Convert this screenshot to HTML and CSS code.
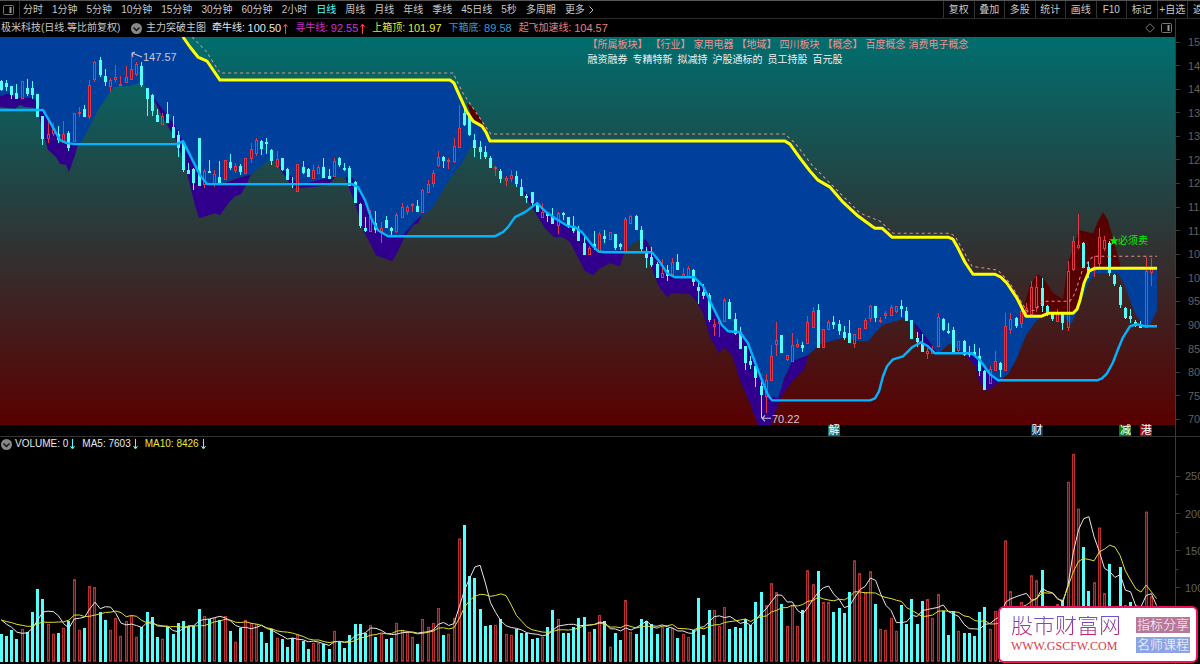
FILE: index.html
```html
<!DOCTYPE html>
<html lang="zh-CN">
<head>
    <meta charset="UTF-8">
    <title>极米科技 日线</title>
    <link rel="stylesheet" href="styles.css">
</head>
<body>

    <!-- Period bar -->
    <header class="topbar">
        <button class="layout-btn" aria-label="布局">
            <svg width="11" height="10" viewBox="0 0 11 10"><rect x="0.5" y="0.5" width="10" height="9" rx="1" fill="none" stroke="#777"/><path d="M7.5 2v6" stroke="#999" stroke-width="2"/></svg>
        </button>
        <nav class="periods">
            <button>分时</button>
            <button>1分钟</button>
            <button>5分钟</button>
            <button>10分钟</button>
            <button>15分钟</button>
            <button>30分钟</button>
            <button>60分钟</button>
            <button>2小时</button>
            <button class="active">日线</button>
            <button>周线</button>
            <button>月线</button>
            <button>年线</button>
            <button>季线</button>
            <button>45日线</button>
            <button>5秒</button>
            <button>多周期</button>
            <button class="more">更多
                <svg width="5" height="8" viewBox="0 0 5 8"><path d="M0.5 0.5L4 4L0.5 7.5" fill="none" stroke="#bbb"/></svg>
            </button>
        </nav>
        <div class="tools">
            <button>复权</button>
            <button>叠加</button>
            <button>多股</button>
            <button>统计</button>
            <button>画线</button>
            <button>F10</button>
            <button>标记</button>
            <button>+自选</button>
            <button>返</button>
        </div>
    </header>

    <!-- Price panel -->
    <section class="panel price">
        <div class="plot">
            <div class="legend">
                <h1 class="stock">极米科技(日线.等比前复权)</h1>
                <button class="fold" aria-label="收起指标">
                    <svg width="11" height="11" viewBox="0 0 11 11"><circle cx="5.5" cy="5.5" r="5.5" fill="#888"/><path d="M2.5 4.5L5.5 7.5L8.5 4.5" fill="none" stroke="#111" stroke-width="1.4"/></svg>
                </button>
                <span class="indicator">主力突破主图</span>
                <span class="value white">牵牛线: <b>100.50</b><svg class="arrow up" viewBox="0 0 5 11"><path d="M2.5 11V2M0.5 4L2.5 1L4.5 4"/></svg></span>
                <span class="value magenta">寻牛线: <b>92.55</b><svg class="arrow up" viewBox="0 0 5 11"><path d="M2.5 11V2M0.5 4L2.5 1L4.5 4"/></svg></span>
                <span class="value yellow">上箱顶: <b>101.97</b></span>
                <span class="value blue">下箱底: <b>89.58</b></span>
                <span class="value salmon">起飞加速线: <b>104.57</b></span>
                <span class="corner">
                    <svg width="10" height="10" viewBox="0 0 10 10"><path d="M5 0.7L9.3 5L5 9.3L0.7 5Z" fill="none" stroke="#777"/></svg>
                    <svg width="11" height="10" viewBox="0 0 11 10"><rect x="0.5" y="0.5" width="10" height="9" rx="1" fill="none" stroke="#777"/><path d="M7.5 2v6" stroke="#999" stroke-width="2"/></svg>
                </span>
            </div>
            <div class="chart price-chart">
                <svg id="price" viewBox="0 37 1175 388" preserveAspectRatio="none">
                    <!-- bands -->
                    <path class="band-up" d="M467 103L475 110L488 132L482 128L472 118ZM1022 313L1030 285L1038 274L1045 280L1053 293L1063 299L1068 263L1074 245L1079 230L1093 233L1098 221L1103 212L1108 220L1114 242L1121 268H1095L1088 272L1078 307L1073 313H1048L1041 316H1026Z"/>
                    <path class="band-main" d="M0 37H183L190 47L198 57L207 61L220 80H452L457 90L467 112L473 121L482 126L490 141H785L800 158L818 180L830 187L843 202L857 215L872 226L882 228L892 237H950L955 241L965 262L973 274H997L1007 282L1017 298L1026 316H1041L1035 322L1026 335L1016 360L1008 374L1000 380L985 378L980 368L968 356L955 347L950 343L940 352L935 353L925 337L918 328L905 318L882 325L875 333L868 341L858 341L845 337L820 344L808 355L792 362L784 378L778 400H770L758 370L748 343L740 332H728L713 307L703 286L694 277H675L660 262L648 242L640 238L625 250L600 252L582 232L568 226L545 211L538 206L530 198L520 188L505 178L490 158L480 147L474 145L470 148L462 163L450 178L440 195L432 208L420 218L404 236H388L372 220L358 187L350 178L340 176L318 181L300 186L290 176L275 162L266 162L251 174L235 178L220 184H207L192 160L175 128L160 108L150 94L142 82L130 86L114 87L110 92L98 110L88 130L80 144H64L44 112L36 100L0 97Z"/>
                    <path class="band-main" d="M1060 313H1073L1078 307L1088 272L1095 268H1157V310L1150 325H1144L1136 315L1130 300L1125 285L1118 273H1095L1088 283L1078 310L1071 324Z"/>
                    <path class="band-low" d="M0 96L10 93L16 98H34L38 104L44 112L58 138L64 143L78 144L75 155L69 172L66 165L60 164L56 157L48 150L43 133L37 108L25 107L20 105L15 109L0 107Z"/>
                    <path class="band-low" d="M152 96L165 112L175 126L184 143L192 160L200 177L207 184H222L238 178L251 174L247 183L241 194L235 196L230 201L224 209L220 215L215 213L199 218L195 205L185 165L176 140L163 118Z"/>
                    <path class="band-low" d="M276 163L290 175L300 185L318 180L336 176L328 185L310 187L293 188ZM345 177L352 177L358 187L365 200L372 220L378 230L388 236H402L415 221L422 215L418 223L413 225L404 238L397 253L392 261L376 255L370 243L363 230L355 203Z"/>
                    <path class="band-low" d="M520 187L533 199L545 211L568 226L575 227L582 232L593 246L605 252L625 250L620 266L610 263L600 268L593 275L585 271L580 261L570 242L563 237H554L545 228L535 212Z"/>
                    <path class="band-low" d="M640 240L646 239L652 252L660 262L667 273L675 277H694L703 286L713 307L722 325L728 331H740L748 343L758 370L768 395L778 398L785 377L792 361L808 355L805 368L793 380L782 395L776 410L771 425H758L750 403L740 380L732 355L724 347L719 353L710 337L703 313L697 302L690 294L672 293L667 297L658 285L650 262Z"/>
                    <path class="band-low" d="M912 320L920 329L930 342L938 354L930 350L920 340ZM965 354L975 355L985 368L998 379L1002 381L995 385L987 391L980 383L975 366Z"/>
                    <g id="candles" class="candles"></g>
                    <!-- lines -->
                    <path class="line speed" d="M192 37L206 51L220 73H453L463 93L488 130L491 134H785L795 143L812 165L829 182L860 213L880 221L893 233H950L955 236L972 266L998 270L1010 283L1027 311L1035 310L1043 301H1070L1075 293L1083 268L1093 256H1157"/>
                    <path class="line bottom-box" d="M0 110H43L50 122L60 140L67 143L75 144H177L183 141L190 155L200 175L207 184H352L358 187L365 200L372 220L378 230L388 236H495L503 232L508 227L515 217L525 212L537 203L545 211L555 218L568 226L575 227L582 232L593 246L598 251L605 252H652L660 262L667 273L675 277H694L703 286L713 307L722 325L728 331L740 332L748 343L758 370L768 395L772 400H870L875 398L879 391L883 376L887 366L893 359L903 356L912 347L921 342L928 346L935 353H972L980 360L990 374L998 380H1097L1102 378L1107 373L1113 362L1118 349L1123 337L1130 326L1137 324L1145 326H1157"/>
                    <path class="line top-box" d="M183 37L190 47L198 57L207 61L220 80H450L454 83L457 90L467 112L473 121L482 126L486 132L490 141H785L790 144L795 151L800 158L810 171L818 180L830 187L843 202L857 215L872 226L875 228H882L892 237H948L953 239L957 246L965 262L973 274H995L1001 277L1007 283L1017 298L1026 316H1041L1048 313H1073L1077 309L1080 300L1084 283L1089 271L1095 268H1157"/>
                    <!-- high / low marks -->
                    <path class="mark" d="M142 57L132 53M135 52L132 53L133 57M771 418H762M765 415L762 418L765 421"/>
                    <text class="extreme" x="143" y="61">147.57</text>
                    <text class="extreme" x="772" y="423">70.22</text>
                    <path class="sell" d="M1114 235L1115 239H1119L1116 241L1117 245L1114 243L1111 245L1112 241L1109 239H1113Z"/>
                    <text class="sell" x="1118" y="244">必须卖</text>
                </svg>
                <div class="tags">
                    <p class="tags-main"><span>【所属板块】</span><span>【行业】</span><span>家用电器</span><span>【地域】</span><span>四川板块</span><span>【概念】</span><span>百度概念</span><span>消费电子概念</span></p>
                    <p class="tags-more"><span>融资融券</span><span>专精特新</span><span>拟减持</span><span>沪股通标的</span><span>员工持股</span><span>百元股</span></p>
                </div>
            </div>
            <div class="events" id="events"></div>
        </div>
        <ul class="axis price-axis">
            <li>15</li><li>14</li><li>14</li><li>13</li><li>13</li><li>12</li><li>12</li><li>11</li><li>11</li>
            <li>10</li><li>10</li><li>95</li><li>90</li><li>85</li><li>80</li><li>75</li><li>70</li>
        </ul>
    </section>

    <!-- Volume panel -->
    <section class="panel volume">
        <div class="plot">
            <div class="legend">
                <button class="fold" aria-label="收起成交量">
                    <svg width="11" height="11" viewBox="0 0 11 11"><circle cx="5.5" cy="5.5" r="5.5" fill="#888"/><path d="M2.5 4.5L5.5 7.5L8.5 4.5" fill="none" stroke="#111" stroke-width="1.4"/></svg>
                </button>
                <span class="value white">VOLUME: 0<svg class="arrow down" viewBox="0 0 5 11"><path d="M2.5 0V9M0.5 7L2.5 10L4.5 7"/></svg></span>
                <span class="value white">MA5: 7603<svg class="arrow down" viewBox="0 0 5 11"><path d="M2.5 0V9M0.5 7L2.5 10L4.5 7"/></svg></span>
                <span class="value yellow">MA10: 8426<svg class="arrow down" viewBox="0 0 5 11"><path d="M2.5 0V9M0.5 7L2.5 10L4.5 7"/></svg></span>
            </div>
            <div class="chart">
                <svg id="volume" viewBox="0 450 1175 214" preserveAspectRatio="none">
                    <g id="bars" class="bars"></g>
                    <path id="ma5" class="ma ma5"/>
                    <path id="ma10" class="ma ma10"/>
                </svg>
            </div>
        </div>
        <ul class="axis volume-axis">
            <li>250</li><li class="minor"></li>
            <li>200</li><li class="minor"></li>
            <li>150</li><li class="minor"></li>
            <li>100</li><li class="minor"></li>
            <li></li>
        </ul>
    </section>

    <aside class="watermark">
        <div class="site">
            <strong>股市财富网</strong>
            <span>WWW.GSCFW.COM</span>
        </div>
        <div class="badges">
            <span class="badge rose">指标分享</span>
            <span class="badge sky">名师课程</span>
        </div>
    </aside>

    <script src="chart.js"></script>
</body>
</html>
```

FILE: styles.css
```css
* {
    box-sizing: border-box;
}
body {
    margin: 0;
    height: 100vh;
    display: flex;
    flex-direction: column;
    overflow: hidden;
    background: #000;
    color: #c8c8c8;
    font-family: "Liberation Sans", "Noto Sans CJK SC", sans-serif;
    font-size: 10px;
    line-height: 14px;
}
button {
    padding: 0;
    border: 0;
    background: none;
    color: inherit;
    font: inherit;
    white-space: nowrap;
    cursor: pointer;
}
button:hover {
    color: #fff;
}
svg {
    display: block;
}
h1, p, ul {
    margin: 0;
    padding: 0;
}

/* period bar */
.topbar {
    display: flex;
    height: 19px;
    flex: none;
    border-top: 1px solid #555;
    border-bottom: 1px solid #2a2a2a;
}
.layout-btn {
    width: 20px;
    padding-left: 3px;
    border-right: 1px solid #333;
}
.periods {
    display: flex;
    align-items: center;
    gap: 9px;
    padding-left: 3px;
}
.periods .active {
    color: #54ffff;
}
.more {
    display: flex;
    align-items: center;
    gap: 4px;
}
.tools {
    display: grid;
    grid-template-columns: repeat(8, 1fr) 13px;
    width: 257px;
    margin-left: auto;
    overflow: hidden;
}
.tools button {
    border-left: 1px solid #333;
}
.tools button:last-child {
    padding-left: 5px;
    text-align: left;
}

/* panels */
.panel {
    display: flex;
    min-height: 0;
}
.price {
    flex: 418;
    border-bottom: 1px solid #333;
}
.volume {
    flex: 227;
}
.plot {
    display: flex;
    flex-direction: column;
    flex: 1;
    min-width: 0;
}
.chart {
    position: relative;
    flex: 1;
    min-height: 0;
}
.chart > svg {
    width: 100%;
    height: 100%;
}
.price-chart {
    background: linear-gradient(#006e6e, #5a0000);
}
.legend {
    display: flex;
    align-items: center;
    height: 18px;
    flex: none;
    padding-left: 1px;
    white-space: nowrap;
}
.volume .legend {
    height: 14px;
    gap: 7px;
}
.volume .fold {
    margin-right: -4px;
}
.stock {
    width: 130px;
    font-size: 10px;
    font-weight: normal;
}
.indicator {
    width: 66px;
    margin-left: 4px;
}
.value {
    display: flex;
    align-items: center;
    margin-right: 7px;
    white-space: pre;
}
.volume .value {
    margin-right: 0;
}
.value b {
    font-size: 11px;
    font-weight: normal;
}
.white {
    color: #e8e8e8;
}
.magenta {
    color: #d030d0;
}
.yellow {
    color: #e8e840;
}
.blue {
    color: #3898d8;
}
.salmon {
    color: #e88080;
}
.arrow {
    width: 5px;
    height: 11px;
    margin-left: 2px;
    fill: none;
}
.up {
    stroke: #ff4040;
}
.down {
    stroke: #54ffff;
}
.corner {
    display: flex;
    gap: 6px;
    margin-left: auto;
    padding-right: 3px;
}

/* price chart */
.band-main {
    fill: #00409c;
}
.band-low {
    fill: #30008c;
}
.band-up {
    fill: #560000;
}
.line {
    fill: none;
    stroke-linejoin: round;
}
.top-box {
    stroke: #ffff00;
    stroke-width: 3;
}
.bottom-box {
    stroke: #00b4ff;
    stroke-width: 2.4;
}
.speed {
    stroke: #e09090;
    stroke-dasharray: 3 3;
}
.candles, .bars {
    shape-rendering: crispEdges;
}
.candles .rise {
    fill: none;
    stroke: #e03848;
}
.candles .fall {
    fill: #54ffff;
    stroke: #54ffff;
}
.mark {
    fill: none;
    stroke: #c8c8d8;
}
.extreme {
    fill: #c8c8d8;
    font-size: 11px;
}
.sell {
    fill: #00f000;
    font-size: 10px;
}
.tags {
    position: absolute;
    top: 0;
    left: 50%;
    white-space: nowrap;
}
.tags p {
    display: flex;
    line-height: 15px;
}
.tags-main {
    gap: 3px;
    color: #f09090;
}
.tags-more {
    gap: 5px;
    color: #f0f0f0;
}
.events {
    position: relative;
    height: 11px;
    flex: none;
}
.event {
    position: absolute;
    width: 12px;
    height: 11px;
    margin-left: -6px;
    color: #fff;
    font-size: 11px;
    line-height: 11px;
    text-align: center;
}
.teal {
    background: #007878;
}
.navy {
    background: #003468;
}
.green {
    background: #088008;
}
.red {
    background: #900c18;
}

/* volume chart */
.bars .rise {
    fill: #501414;
    stroke: #b83434;
}
.bars .fall {
    fill: #54ffff;
    stroke: none;
}
.ma {
    fill: none;
}
.ma5 {
    stroke: #e8e8e8;
}
.ma10 {
    stroke: #e0e030;
}

/* axes */
.axis {
    display: flex;
    flex-direction: column;
    justify-content: space-between;
    width: 25px;
    flex: none;
    overflow: hidden;
    border-left: 1px solid #3a3a3a;
    color: #606060;
    font-size: 11px;
    list-style: none;
}
.axis li {
    display: flex;
    align-items: center;
    gap: 8px;
    height: 14px;
}
.axis li::before {
    content: "";
    width: 4px;
    border-top: 1px solid #3a3a3a;
    flex: none;
}
.axis .minor::before {
    width: 2px;
}
.price-axis {
    padding: 16px 0 10px;
}
.volume-axis {
    padding: 32px 0;
}
.volume-axis li {
    gap: 5px;
}

/* site stamp over the corner of the chart */
.watermark {
    position: absolute;
    right: 2px;
    bottom: 1px;
    display: flex;
    align-items: center;
    gap: 15px;
    padding: 8px 6px 8px 11px;
    border: 2px solid #f01060;
    border-radius: 6px;
    background: #fff;
}
.site {
    display: flex;
    flex-direction: column;
    gap: 3px;
}
.site strong {
    font-size: 22px;
    font-weight: 300;
    line-height: 20px;
    color: transparent;
    background: linear-gradient(#6858d8, #c02060);
    background-clip: text;
    -webkit-background-clip: text;
}
.site span {
    color: #d83848;
    font-family: "Liberation Serif", serif;
    font-size: 12px;
}
.badges {
    display: flex;
    flex-direction: column;
    gap: 4px;
}
.badge {
    padding: 0 1px;
    color: #fff;
    font-size: 13px;
    font-weight: 300;
    line-height: 16px;
}
.rose {
    background: #b87898;
}
.sky {
    background: #8ca4e4;
}
```

FILE: chart.js
```javascript
// r = rising, f = falling; then high, body top, body bottom, low
const candles = `
f80,81,89,91 f80,83,86,91 f86,86,94,99 f84,93,98,99 r81,81,98,98 f79,88,93,96 f81,88,94,99 f94,94,116,116
f116,116,138,145 r118,134,138,143 r123,128,133,136 f126,134,139,143 r121,134,142,143 f131,133,147,151
r113,113,141,141 r107,112,113,117 f105,109,116,116 r80,85,116,119 r61,62,79,82 f57,60,74,77 f69,76,81,86
r78,80,86,92 r65,77,79,82 r76,84,84,86 r66,77,82,82 r54,69,79,80 r62,64,74,76 f62,66,84,87 f88,88,98,116
f94,95,110,116 f109,115,121,122 r113,116,124,124 f102,114,122,123 f116,127,137,137 f131,135,147,157
f143,143,169,172 f163,170,173,173 f168,169,182,190 f138,138,185,185 r169,171,184,188 f160,171,172,172
r170,174,184,187 f161,177,182,182 r160,160,179,179 f154,162,167,170 r163,166,170,173 f164,166,171,175
r158,158,173,173 r143,149,158,163 r138,140,153,156 f140,141,148,155 f138,142,143,154 f149,150,160,165
r151,159,166,168 f158,158,169,171 f168,169,179,179 f177,183,184,188 r164,164,191,191 f161,167,172,174
f168,169,176,176 r165,170,178,178 r165,167,173,173 f158,167,177,177 f169,176,178,178 r158,161,176,176
f157,158,164,167 f163,168,169,171 f166,168,185,186 f181,182,202,202 f203,204,225,228 f217,228,230,232
r210,216,231,231 f211,223,229,233 r222,228,231,243 f216,220,227,228 f227,228,230,236 r213,215,231,233
r203,207,217,217 r205,207,211,215 r203,204,205,212 f200,206,211,211 r189,190,212,212 r180,184,192,192
r170,173,183,187 r151,157,165,167 f156,157,160,168 r158,160,161,169 r138,146,161,163 r105,128,147,147
f107,113,124,126 f113,116,134,136 f134,140,147,157 f141,147,151,159 f146,152,156,159 f156,158,167,167
r166,167,168,176 f169,171,178,183 r176,178,180,186 r170,175,178,182 f171,176,183,187 f179,187,195,195
f194,196,197,203 f192,192,202,206 f202,203,211,211 r203,212,217,217 f212,213,215,222 f208,217,223,224
r212,213,225,234 f212,213,214,220 f217,217,225,228 f216,226,230,233 f226,230,240,240 f236,243,254,254
r246,248,254,254 f231,244,246,250 r232,234,252,252 f230,236,238,243 r232,232,239,239 f234,234,247,250
f243,244,246,250 r217,219,251,251 r215,216,223,223 f215,216,229,229 f226,230,248,251 f247,252,257,268
f247,257,264,267 f262,264,277,277 r259,273,277,277 f265,270,275,281 r258,262,274,274 f254,262,269,269
r268,274,276,276 r266,268,276,277 f269,270,281,286 f282,287,290,304 f284,292,295,299 f293,295,319,322
r319,324,326,336 r320,321,323,337 r298,300,321,321 f299,302,318,318 f313,319,333,335 f327,332,348,349
f346,346,362,370 f356,361,364,369 f364,366,377,387 f381,386,394,418 r374,380,396,413 r345,356,380,380
r322,340,344,356 f335,335,352,352 r355,355,359,361 r333,345,361,361 r339,344,346,348 f342,345,347,352
r316,322,343,343 r307,311,327,327 f304,310,347,348 r329,329,347,347 r320,322,329,329 f316,322,324,329
f320,324,330,335 f326,332,337,340 f320,333,342,342 r334,334,343,348 r328,328,338,338 r318,320,328,328
r305,306,318,322 f306,306,317,322 r317,320,320,323 r311,313,315,319 r305,307,315,315 r306,306,311,313
f300,306,308,317 f307,311,320,321 f320,320,338,338 f332,338,341,347 f334,343,351,351 r348,351,353,359
r346,350,353,354 r313,317,346,346 f318,319,329,331 f323,331,332,334 f327,330,351,351 r341,341,350,353
f340,341,354,356 f346,353,354,357 f344,352,355,356 f348,356,370,376 f370,371,389,390 r366,369,383,383
r351,361,370,370 f362,363,369,377 r313,326,370,371 r313,319,329,334 f317,318,325,328 r308,311,323,328
r303,308,312,316 r281,287,314,316 r276,287,307,312 f278,288,305,312 f305,306,313,316 f313,314,318,321
r309,312,321,321 f312,314,322,330 r261,271,327,331 r236,241,269,271 r214,245,247,249 f242,243,267,267
f262,267,271,278 r256,267,270,277 r228,237,263,268 r236,240,248,251 f241,243,272,276 f274,275,283,286
f285,287,304,308 f307,308,317,319 f309,316,318,323 f320,322,325,327 f321,325,327,328 r257,271,327,327
r258,268,272,286`;

// volume bar tops, in thirds of a chart unit below BASE
const volumes = `
f613 f618 f600 f626 r596 f605 f547 f477 f507 r582 r613 f610 r595 f573 r446 r600 f594 r469 r472 f545 f571 r600
r563 r619 r572 r559 r622 f592 f545 f561 f621 r626 f592 f611 f579 f573 f587 f588 f537 r559 f566 r565 f569 r559
f603 r637 f594 r569 r580 r583 f605 f640 f596 r625 f627 f650 f625 r616 f632 f657 r639 r640 f642 f657 r602 f635
f653 f615 f582 f582 f608 r585 f621 r612 f628 f624 r579 r601 r605 r622 f642 r568 r592 r579 r535 f615 r613 r563
r325 f283 f437 f443 f537 f589 f585 r585 f567 r613 r615 f598 f608 f610 f627 f624 r620 f592 f540 r567 f610 f608
f591 f563 f561 r605 f598 r556 f574 r650 f608 f629 r511 r605 f611 f566 f574 f582 f613 r590 f594 r595 f625 r613
r621 f600 f505 f615 f540 r541 r587 r532 f598 f590 f595 f567 f586 f516 f487 r526 r459 r485 f521 r587 r526 r587
f540 r421 r461 f424 r516 r516 f547 f535 f550 f487 r391 r430 r485 r424 f523 r598 r601 r565 r603 f524 f582 f508
f581 f514 r508 r565 r493 f544 f616 f543 r603 f610 f610 f619 f547 f532 r598 r543 f576 r331 r482 f568 r515 r554
r436 r451 f420 f558 f575 r521 f510 r154 r70 r235 f352 f482 r457 r291 r490 f401 f571 f412 r526 f515 f616 f581
r243 r499`;

// sessions before the first visible one, needed by the averages
const earlier = [570, 570, 570, 570, 572, 553, 553, 553, 578];

const events = [
    { bar: 160, text: '解', color: 'teal' },
    { bar: 199, text: '财', color: 'navy' },
    { bar: 216, text: '减', color: 'green' },
    { bar: 220, text: '港', color: 'red' }
];

const WIDTH = 1175;
const BASE = 430;
const FLOOR = 662;
const barX = i => 1.3 + i * 5.204;
const kind = s => s[0] === 'r' ? 'rise' : 'fall';

document.getElementById('candles').innerHTML = candles.trim().split(/\s+/).map((s, i) => {
    const [high, top, bottom, low] = s.slice(1).split(',').map(Number);
    const x = Math.round(barX(i) - 0.5) + 0.5;
    const h = Math.max(bottom - top, 1);
    return `<g class="${kind(s)}"><path d="M${x} ${high}V${top}M${x} ${top + h}V${low}"/>` +
        `<rect x="${x - 1}" y="${top}" width="2" height="${h}"/></g>`;
}).join('');

const list = volumes.trim().split(/\s+/);
document.getElementById('bars').innerHTML = list.map((s, i) => {
    const y = Math.round(BASE + s.slice(1) / 3);
    const x = Math.round(barX(i) - 0.5) - 1;
    return s[0] === 'r'
        ? `<rect class="rise" x="${x + 0.5}" y="${y + 0.5}" width="2" height="${FLOOR - y - 1}"/>`
        : `<rect class="fall" x="${x}" y="${y}" width="3" height="${FLOOR - y}"/>`;
}).join('');

// the running session has no volume yet, so it sits on the floor
const tops = earlier.concat(list.map(s => Number(s.slice(1))), 695);

function average(n) {
    let d = '';
    for (let i = earlier.length; i < tops.length; i++) {
        const part = tops.slice(i - n + 1, i + 1);
        const y = BASE + part.reduce((a, b) => a + b, 0) / n / 3;
        d += (d ? 'L' : 'M') + barX(i - earlier.length).toFixed(1) + ' ' + y.toFixed(1);
    }
    return d;
}
document.getElementById('ma5').setAttribute('d', average(5));
document.getElementById('ma10').setAttribute('d', average(10));

document.getElementById('events').innerHTML = events.map(e =>
    `<span class="event ${e.color}" style="left: ${(barX(e.bar) / WIDTH * 100).toFixed(2)}%">${e.text}</span>`
).join('');
```
